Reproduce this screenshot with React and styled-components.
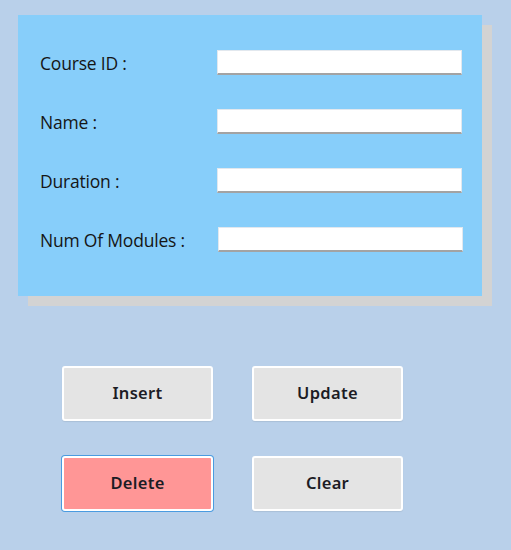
import React from "react";
import styled, { createGlobalStyle } from "styled-components";

const GlobalStyle = createGlobalStyle`
  html, body {
    margin: 0;
    padding: 0;
    background: #b9d0ea;
  }
  body {
    font-family: "Open Sans", "Noto Sans", sans-serif;
  }
`;

const fields = [
  { id: "courseId", label: "Course ID :" },
  { id: "name", label: "Name :" },
  { id: "duration", label: "Duration :" },
  { id: "modules", label: "Num Of Modules :", shift: true },
];

export default function App() {
  return (
    <>
      <GlobalStyle />
      <Page>
        <FormPanel>
          {fields.map((f) => (
            <Row key={f.id}>
              <Label htmlFor={f.id}>{f.label}</Label>
              <Input id={f.id} type="text" $shift={f.shift} />
            </Row>
          ))}
        </FormPanel>
        <ButtonGrid>
          <ActionButton>Insert</ActionButton>
          <ActionButton>Update</ActionButton>
          <ActionButton $danger>Delete</ActionButton>
          <ActionButton>Clear</ActionButton>
        </ButtonGrid>
      </Page>
    </>
  );
}

const Page = styled.div`
  width: 511px;
  height: 550px;
  padding: 15px 0 0 18px;
  box-sizing: border-box;
`;

const FormPanel = styled.div`
  width: 464px;
  height: 281px;
  box-sizing: border-box;
  background: #87cefa;
  box-shadow: 10px 10px 0 #d3d3d3;
  padding: 35px 0 0 22px;
  display: flex;
  flex-direction: column;
  gap: 34px;
`;

const Row = styled.div`
  display: flex;
  align-items: center;
  height: 25px;
`;

const Label = styled.label`
  width: 177px;
  font-size: 17.5px;
  letter-spacing: -0.2px;
  color: #151515;
`;

const Input = styled.input`
  width: 245px;
  height: 25px;
  box-sizing: border-box;
  margin-left: ${(p) => (p.$shift ? "1px" : "0")};
  border: 1px solid #e2e8ee;
  border-bottom: 2px solid #a3a3a3;
  background: #fff;
  outline: none;
`;

const ButtonGrid = styled.div`
  display: grid;
  grid-template-columns: 151px 151px;
  grid-auto-rows: 55px;
  column-gap: 39px;
  row-gap: 35px;
  margin: 70px 0 0 44px;
`;

const ActionButton = styled.button`
  box-sizing: border-box;
  padding: 0 0 2px;
  background: ${(p) => (p.$danger ? "#ff9696" : "#e4e4e4")};
  border: 2px solid #ffffff;
  border-radius: 3px;
  box-shadow: ${(p) => (p.$danger ? "0 0 0 1px #4a9be0" : "0 1px 1px rgba(0,0,0,0.08)")};
  font-family: "Noto Sans", sans-serif;
  font-weight: 600;
  font-size: 16.5px;
  letter-spacing: 0.3px;
  color: #1c1c24;
  cursor: pointer;
`;
